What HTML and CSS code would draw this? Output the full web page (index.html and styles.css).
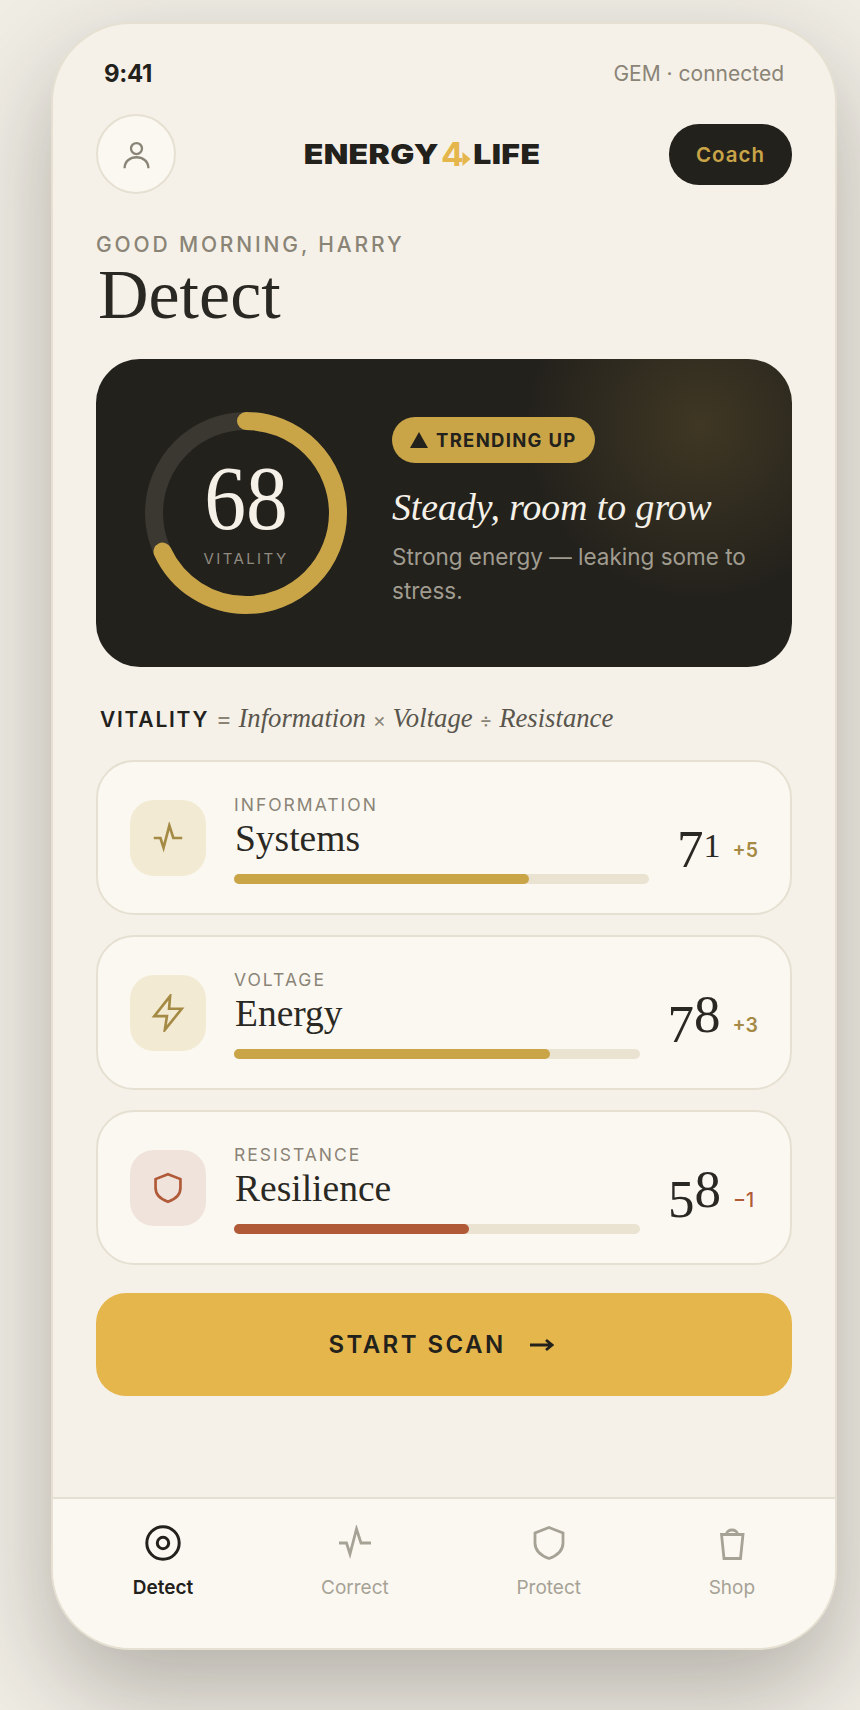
FILE: index.html
```html
<!DOCTYPE html>
<html lang="en">
<head>
<meta charset="utf-8">
<title>Energy4Life</title>
<link rel="stylesheet" href="styles.css">
</head>
<body>
<div class="phone">
  <div class="status"><span class="time">9:41</span><span class="conn">GEM · connected</span></div>
  <header class="top">
    <div class="avatar">
      <svg class="avatar-ico" viewBox="0 0 36 36"><circle cx="18" cy="11.5" r="6"/><path d="M5 33C5 17 31 17 31 33"/></svg>
    </div>
    <div class="logo"><span>ENERGY</span><span class="four">4</span><span>LIFE</span></div>
    <button class="coach">Coach</button>
  </header>
  <p class="greet">GOOD MORNING, HARRY</p>
  <h1 class="title">Detect</h1>
  <section class="hero">
    <div class="ring">
      <svg class="ring-svg" viewBox="0 0 204 204">
        <circle class="ring-track" cx="102" cy="102" r="92"/>
        <circle class="ring-val" cx="102" cy="102" r="92"/>
      </svg>
      <div class="ring-text"><span class="ring-num">68</span><span class="ring-lbl">VITALITY</span></div>
    </div>
    <div class="hero-text">
      <span class="badge"><span class="tri"></span>TRENDING UP</span>
      <h2 class="hero-title">Steady, room to grow</h2>
      <p class="hero-sub">Strong energy — leaking some to stress.</p>
    </div>
  </section>
  <p class="formula"><b>VITALITY</b> <span class="eq">=</span> <i>Information</i> <span class="op">×</span> <i>Voltage</i> <span class="op">÷</span> <i>Resistance</i></p>
  <div class="cards">
    <article class="card">
      <div class="ico gold"><svg viewBox="0 0 36 36"><path d="M2 18H9.5L13 29L19.5 4L24 18H34"/></svg></div>
      <div class="body">
        <div class="lbl">INFORMATION</div>
        <div class="name">Systems</div>
        <div class="bar"><div class="fill" style="width:71%"></div></div>
      </div>
      <div class="score"><span class="num"><span class="lo">7</span><span class="sm">1</span></span><span class="delta">+5</span></div>
    </article>
    <article class="card">
      <div class="ico gold"><svg class="bolt" viewBox="0 0 36 36"><path d="M20 2L5 21H17L15 34L31 14H19Z"/></svg></div>
      <div class="body">
        <div class="lbl">VOLTAGE</div>
        <div class="name">Energy</div>
        <div class="bar"><div class="fill" style="width:78%"></div></div>
      </div>
      <div class="score"><span class="num"><span class="lo">7</span>8</span><span class="delta">+3</span></div>
    </article>
    <article class="card">
      <div class="ico rust"><svg viewBox="0 0 36 36"><path d="M18 2.5L32 8V18C32 26 25 31 18 33.5C11 31 4 26 4 18V8Z"/></svg></div>
      <div class="body">
        <div class="lbl">RESISTANCE</div>
        <div class="name">Resilience</div>
        <div class="bar"><div class="fill rust-fill" style="width:58%"></div></div>
      </div>
      <div class="score"><span class="num"><span class="lo">5</span>8</span><span class="delta rust-txt">−1</span></div>
    </article>
  </div>
  <button class="scan"><span>START SCAN</span>
    <svg class="arrow" viewBox="0 0 24 18"><path d="M0 9H22M16 4L22 9L16 14"/></svg>
  </button>
  <nav class="nav">
    <a class="tab on"><svg viewBox="0 0 36 36"><circle cx="18" cy="18" r="16.2"/><circle cx="18" cy="18" r="5.7"/></svg><span>Detect</span></a>
    <a class="tab"><svg viewBox="0 0 36 36"><path d="M2 18H9.5L13 29L19.5 4L24 18H34"/></svg><span>Correct</span></a>
    <a class="tab"><svg viewBox="0 0 36 36"><path d="M18 2.5L32 8V18C32 26 25 31 18 33.5C11 31 4 26 4 18V8Z"/></svg><span>Protect</span></a>
    <a class="tab"><svg viewBox="0 0 36 36"><path d="M7.5 9.5H29L26.5 33.5H10ZM12.5 9.5C12.5 3.5 23.5 3.5 23.5 9.5"/></svg><span>Shop</span></a>
  </nav>
</div>
</body>
</html>
```
FILE: styles.css
```css
* { box-sizing: border-box; }
html, body { margin: 0; height: 1710px; overflow: hidden; }
body {
  background: #f0ede5;
  font-family: Inter, "Liberation Sans", sans-serif;
  color: #23211c;
}
.phone {
  width: 786px;
  height: 1628px;
  margin: 22px 0 0 51px;
  background: #f5f1e8;
  border: 2px solid #e6e0d2;
  border-radius: 80px;
  box-shadow: 0 40px 100px rgba(35, 33, 28, .3);
  display: flex;
  flex-direction: column;
  overflow: hidden;
}
.status {
  display: flex;
  justify-content: space-between;
  align-items: center;
  height: 30px;
  margin: 34px 51px 0 51px;
}
.time { font-size: 24px; font-weight: 700; letter-spacing: -.3px; }
.conn { font-size: 21px; color: #8a8477; }
.top {
  display: flex;
  justify-content: space-between;
  align-items: center;
  height: 80px;
  margin: 26px 43px 0;
}
.avatar {
  width: 80px;
  height: 80px;
  border-radius: 50%;
  background: #fbf8f1;
  border: 2px solid #e6e0d2;
  display: flex;
  align-items: center;
  justify-content: center;
}
.avatar-ico { width: 33px; height: 33px; fill: none; stroke: #8a8477; stroke-width: 2.5; }
.logo {
  display: flex;
  align-items: center;
  font-size: 27.5px;
  font-weight: 900;
  letter-spacing: .35px;
  line-height: 32px;
  transform: scaleX(1.16);
}
.four {
  position: relative;
  color: #e5b64b;
  font-size: 33px;
  font-weight: 700;
  margin: 0 6px 0 1px;
  transform: scaleX(.88);
}
.four::after {
  content: "";
  position: absolute;
  right: -6px;
  top: 14px;
  border-left: 8px solid #e5b64b;
  border-top: 7px solid transparent;
  border-bottom: 7px solid transparent;
}
.coach {
  width: 123px;
  height: 61px;
  border: 0;
  border-radius: 30px;
  background: #23211c;
  color: #c9a548;
  font: 600 20.5px Inter, sans-serif;
  letter-spacing: 1px;
}
.greet {
  margin: 39px 43px 0;
  font-size: 21px;
  line-height: 24px;
  font-weight: 500;
  letter-spacing: 2.85px;
  color: #8a8477;
}
.title {
  margin: 0 43px 0;
  padding-left: 2px;
  font: 400 70px/76px "Liberation Serif", serif;
  color: #2a2823;
}
.hero {
  margin: 26px 43px 0;
  height: 308px;
  border-radius: 44px;
  background: radial-gradient(circle at 604px 66px, rgba(201, 165, 72, .17), rgba(201, 165, 72, 0) 175px), #23211c;
  display: flex;
  align-items: center;
  padding-left: 48px;
  gap: 44px;
}
.ring { position: relative; width: 204px; height: 204px; flex: none; }
.ring-svg { width: 204px; height: 204px; transform: rotate(-90deg); display: block; }
.ring-track, .ring-val { fill: none; stroke-width: 18; }
.ring-track { stroke: #3a3831; }
.ring-val { stroke: #c9a548; stroke-linecap: round; stroke-dasharray: 393 578; }
.ring-text {
  position: absolute;
  inset: 0;
  display: flex;
  flex-direction: column;
  align-items: center;
  justify-content: center;
}
.ring-num { font: 300 90px/76px "Liberation Serif", serif; color: #f5f1e8; transform: scaleX(.93); margin-top: 2px; }
.ring-lbl { font-size: 15px; letter-spacing: 2.4px; color: #8f8b80; margin-top: 12px; }
.hero-text { display: flex; flex-direction: column; align-items: flex-start; padding-bottom: 1px; }
.badge {
  display: flex;
  align-items: center;
  gap: 8px;
  height: 46px;
  padding: 0 18px;
  border-radius: 23px;
  background: #c9a548;
  font-size: 18.5px;
  font-weight: 700;
  letter-spacing: 1.3px;
}
.tri {
  border-left: 9px solid transparent;
  border-right: 9px solid transparent;
  border-bottom: 16px solid #23211c;
}
.hero-title {
  margin: 20px 0 0;
  font: italic 400 37.7px/48px "Liberation Serif", serif;
  color: #f5f1e8;
}
.hero-sub {
  margin: 9px 0 0;
  width: 360px;
  font-size: 22.5px;
  line-height: 34px;
  color: #a09c90;
}
.formula {
  margin: 31px 47px 0;
  height: 40px;
  line-height: 40px;
  white-space: nowrap;
  font-size: 26.7px;
  color: #5a564d;
  font-family: "Liberation Serif", serif;
}
.formula b { font: 600 21px Inter, sans-serif; letter-spacing: 1.75px; color: #23211c; }
.eq { font: 400 24px Inter, sans-serif; color: #8a8477; }
.op { font: 400 20px Inter, sans-serif; color: #8a8477; }
.cards { margin: 22px 43px 0; display: flex; flex-direction: column; gap: 20px; }
.card {
  height: 155px;
  border: 2px solid #e6e0d2;
  border-radius: 38px;
  background: #fbf8f1;
  display: flex;
  align-items: center;
  padding: 0 32px;
  gap: 28px;
}
.ico {
  width: 76px;
  height: 76px;
  flex: none;
  border-radius: 24px;
  display: flex;
  align-items: center;
  justify-content: center;
}
.ico svg { width: 32px; height: 32px; fill: none; stroke-width: 3; stroke-miterlimit: 10; }
.ico .bolt { width: 38px; height: 38px; stroke-width: 2.5; }
.gold { background: #f2ead3; }
.gold svg { stroke: #a58a45; }
.rust { background: #efe3dc; }
.rust svg { stroke: #b05a38; }
.body { flex: 1; min-width: 0; padding-top: 4px; }
.lbl { font-size: 17.5px; line-height: 20px; letter-spacing: 2px; color: #8a8477; }
.name { font: 400 37.5px/44px "Liberation Serif", serif; margin: 2px 0 0 1px; color: #2a2823; }
.bar { height: 10px; margin-top: 13px; border-radius: 5px; background: #ebe3d2; }
.fill { height: 10px; border-radius: 5px; background: #c9a548; }
.rust-fill { background: #b05a38; }
.score { display: flex; align-items: baseline; gap: 12px; padding-top: 12px; }
.num { font: 400 53px/50px "Liberation Serif", serif; color: #2a2823; }
.lo { vertical-align: -10px; }
.sm { font-size: 34px; }
.delta { min-width: 25px; font-size: 19.5px; font-weight: 600; color: #a58a45; }
.rust-txt { color: #b05a38; font-weight: 500; }
.scan {
  margin: 28px 43px 0;
  height: 103px;
  flex: none;
  border: 0;
  border-radius: 30px;
  background: #e5b64b;
  color: #23211c;
  font: 600 24px Inter, sans-serif;
  letter-spacing: 2.45px;
  display: flex;
  align-items: center;
  justify-content: center;
  gap: 24px;
  padding: 0 6px 0 0;
}
.arrow { width: 24px; height: 18px; fill: none; stroke: #23211c; stroke-width: 2.8; }
.nav {
  margin-top: auto;
  height: 151px;
  flex: none;
  border-top: 2px solid #e6e0d2;
  background: #fbf8f1;
  padding: 26px 16px 0;
  display: flex;
  justify-content: space-around;
  align-items: flex-start;
}
.tab {
  display: flex;
  flex-direction: column;
  align-items: center;
  gap: 15px;
  font-size: 19px;
  line-height: 24px;
  color: #a6a296;
}
.tab svg {
  width: 36px;
  height: 36px;
  fill: none;
  stroke: #a6a296;
  stroke-width: 2.8;
  stroke-miterlimit: 10;
}
.tab.on { color: #23211c; font-weight: 600; }
.tab.on svg { stroke: #23211c; stroke-width: 3; }
```
